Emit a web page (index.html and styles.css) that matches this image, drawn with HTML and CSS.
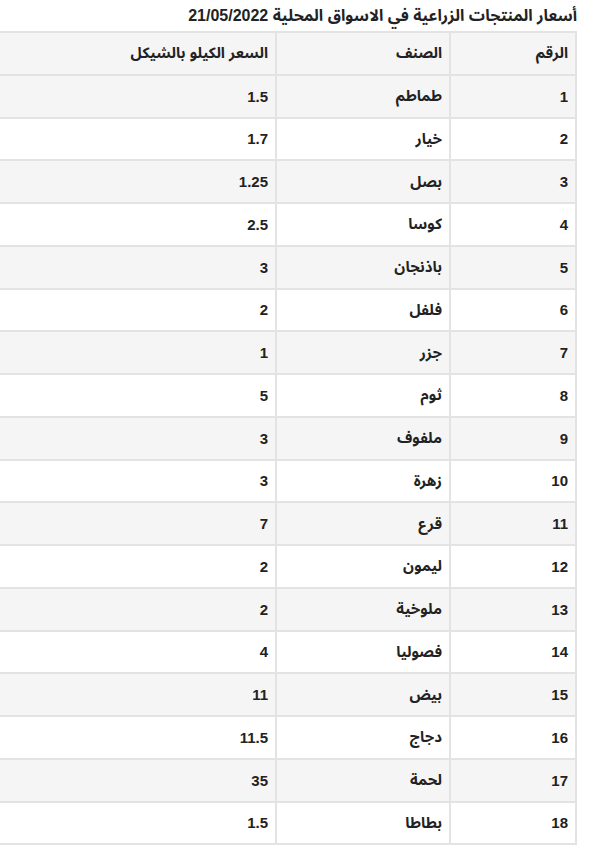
FILE: index.html
```html
<!DOCTYPE html>
<html lang="ar" dir="rtl">
<head>
<meta charset="utf-8">
<title>أسعار المنتجات الزراعية</title>
<link rel="stylesheet" href="styles.css">
</head>
<body>
<div class="wrap">
<table class="prices">
<caption>أسعار المنتجات الزراعية في الاسواق المحلية 21/05/2022</caption>
<thead>
<tr><th class="c-num">الرقم</th><th class="c-name">الصنف</th><th class="c-price">السعر الكيلو بالشيكل</th></tr>
</thead>
<tbody>
<tr><td>1</td><td>طماطم</td><td>1.5</td></tr>
<tr><td>2</td><td>خيار</td><td>1.7</td></tr>
<tr><td>3</td><td>بصل</td><td>1.25</td></tr>
<tr><td>4</td><td>كوسا</td><td>2.5</td></tr>
<tr><td>5</td><td>باذنجان</td><td>3</td></tr>
<tr><td>6</td><td>فلفل</td><td>2</td></tr>
<tr><td>7</td><td>جزر</td><td>1</td></tr>
<tr><td>8</td><td>ثوم</td><td>5</td></tr>
<tr><td>9</td><td>ملفوف</td><td>3</td></tr>
<tr><td>10</td><td>زهرة</td><td>3</td></tr>
<tr><td>11</td><td>قرع</td><td>7</td></tr>
<tr><td>12</td><td>ليمون</td><td>2</td></tr>
<tr><td>13</td><td>ملوخية</td><td>2</td></tr>
<tr><td>14</td><td>فصوليا</td><td>4</td></tr>
<tr><td>15</td><td>بيض</td><td>11</td></tr>
<tr><td>16</td><td>دجاج</td><td>11.5</td></tr>
<tr><td>17</td><td>لحمة</td><td>35</td></tr>
<tr><td>18</td><td>بطاطا</td><td>1.5</td></tr>
</tbody>
</table>
</div>
</body>
</html>
```
FILE: styles.css
```css
html, body {
  margin: 0;
  padding: 0;
  background: #fff;
  overflow: hidden;
}
body {
  font-family: "Liberation Sans", "Noto Sans Arabic", sans-serif;
  color: #222;
  direction: rtl;
}
.wrap {
  margin-right: 31px;
}
.prices {
  width: 584px;
  border-collapse: collapse;
  font-size: 15px;
  font-weight: bold;
}
.prices caption {
  text-align: right;
  font-size: 16px;
  font-weight: bold;
  padding: 6px 0 5px;
  line-height: 20px;
}
.prices th,
.prices td {
  border: 2px solid #e3e3e3;
  text-align: right;
  padding: 0 7px;
  height: 40.75px;
  vertical-align: middle;
}
.prices th { background: #f5f5f5; }
.c-num { width: 110px; }
.c-name { width: 158px; }
.prices tbody tr:nth-child(odd) td { background: #f5f5f5; }
```
